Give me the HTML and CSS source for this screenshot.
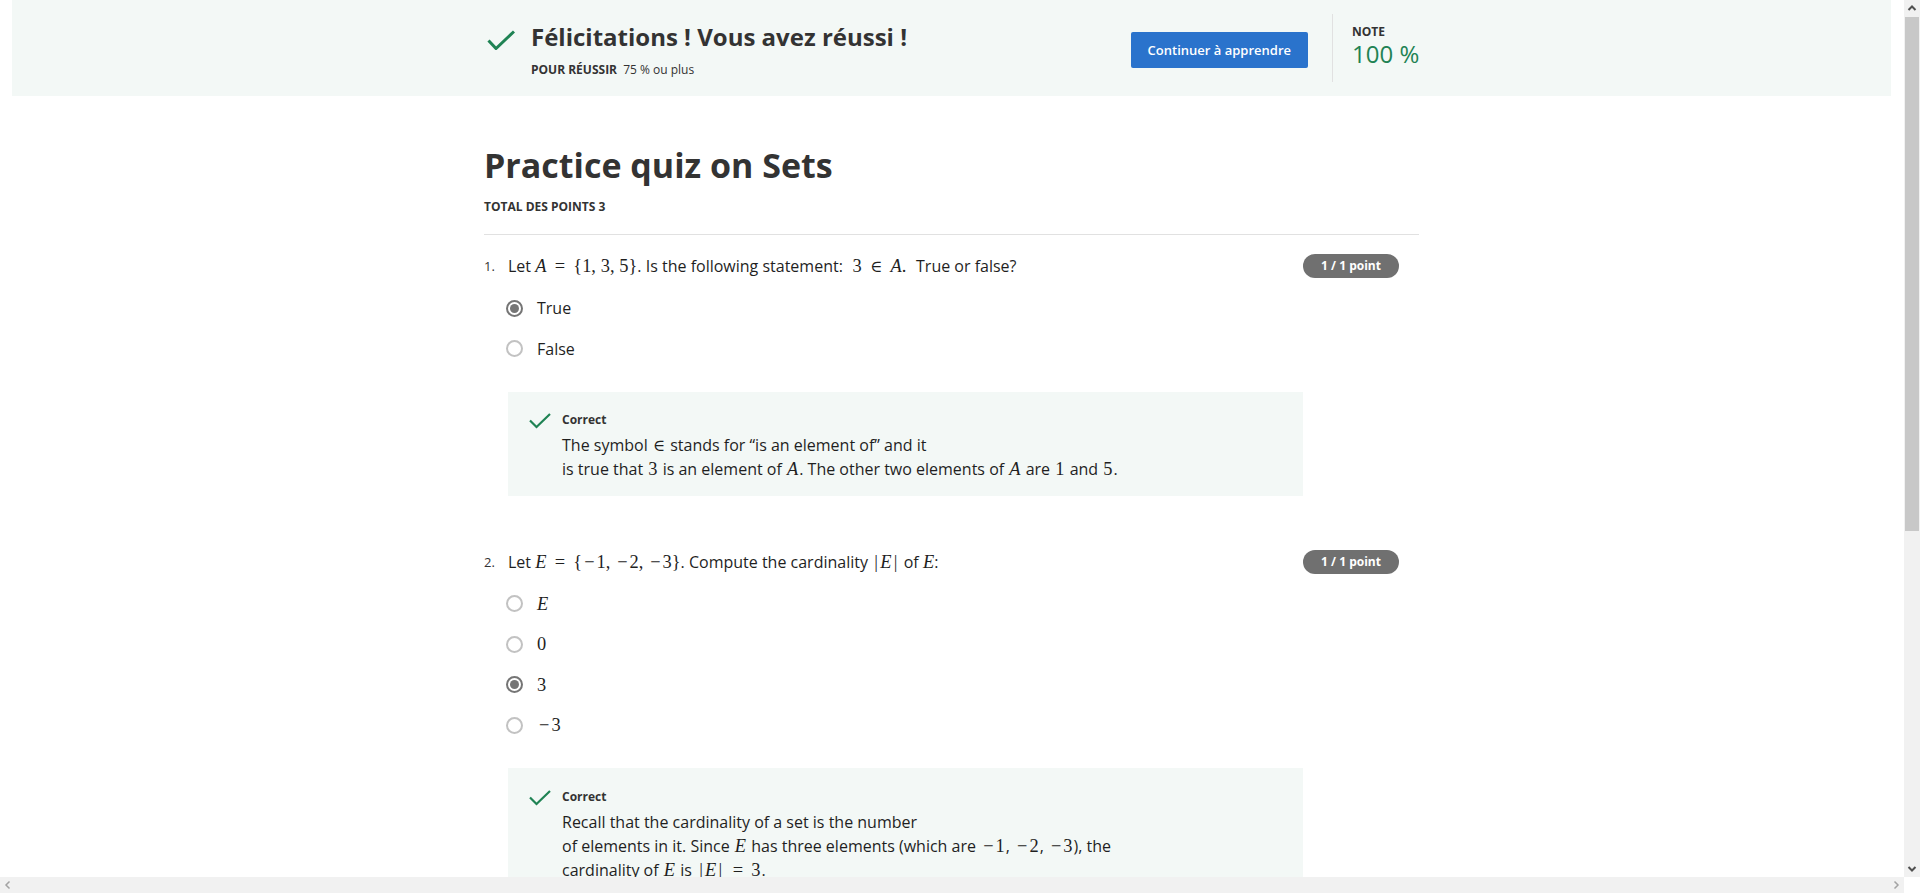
FILE: index.html
```html
<!DOCTYPE html>
<html lang="fr">
<head>
<meta charset="utf-8">
<title>Practice quiz on Sets</title>
<link rel="stylesheet" href="styles.css">
</head>
<body>
<div class="window">
  <div class="viewport">
    <div class="page">
      <header class="banner">
        <div class="banner-inner">
          <div class="result">
            <svg class="result-check" viewBox="0 0 28 20" aria-hidden="true"><polyline points="1.5,10.5 9,18.5 27,1.5" fill="none" stroke="#1f8354" stroke-width="3"/></svg>
            <div class="result-text">
              <h2 class="result-title">Félicitations ! Vous avez réussi !</h2>
              <div class="result-sub"><span class="label">POUR RÉUSSIR</span> 75 % ou plus</div>
            </div>
          </div>
          <button class="btn">Continuer à apprendre</button>
          <div class="divider"></div>
          <div class="grade">
            <div class="label">NOTE</div>
            <div class="grade-value">100 %</div>
          </div>
        </div>
      </header>

      <main class="quiz">
        <h1 class="quiz-title">Practice quiz on Sets</h1>
        <div class="total">TOTAL DES POINTS 3</div>
        <hr class="sep">

        <section class="question">
          <div class="q-num">1.</div>
          <div class="q-body">
            <div class="q-text">Let <span class="m"><i>A</i><span class="op">=</span>{1,<span class="sp"></span>3,<span class="sp"></span>5}</span>. Is the following statement: <span class="m wide">3<span class="op"><span class="el">∈</span></span><i>A</i>.</span> True or false?</div>
            <div class="options">
              <div class="option"><span class="radio checked"></span><span>True</span></div>
              <div class="option"><span class="radio"></span><span>False</span></div>
            </div>
            <div class="feedback">
              <svg class="fb-check" viewBox="0 0 22 16" aria-hidden="true"><polyline points="1,7.5 7.5,14 21,1" fill="none" stroke="#1f8354" stroke-width="2.2"/></svg>
              <div class="fb-content">
                <div class="fb-title">Correct</div>
                <div class="fb-text">The symbol <span class="m"><span class="el">∈</span></span> stands for “is an element of” and it<br>is true that <span class="m">3</span> is an element of <span class="m"><i>A</i></span>. The other two elements of <span class="m"><i>A</i></span> are <span class="m">1</span> and <span class="m">5</span>.</div>
              </div>
            </div>
          </div>
          <div class="badge">1 / 1 point</div>
        </section>

        <section class="question">
          <div class="q-num">2.</div>
          <div class="q-body">
            <div class="q-text">Let <span class="m"><i>E</i><span class="op">=</span>{<span class="mn">−</span>1,<span class="sp"></span><span class="mn">−</span>2,<span class="sp"></span><span class="mn">−</span>3}</span>. Compute the cardinality <span class="m"><span class="bar">|</span><i>E</i><span class="bar">|</span></span> of <span class="m"><i>E</i></span>:</div>
            <div class="options">
              <div class="option"><span class="radio"></span><span class="m"><i>E</i></span></div>
              <div class="option"><span class="radio"></span><span class="m">0</span></div>
              <div class="option"><span class="radio checked"></span><span class="m">3</span></div>
              <div class="option"><span class="radio"></span><span class="m"><span class="mn">−</span>3</span></div>
            </div>
            <div class="feedback feedback-2">
              <svg class="fb-check" viewBox="0 0 22 16" aria-hidden="true"><polyline points="1,7.5 7.5,14 21,1" fill="none" stroke="#1f8354" stroke-width="2.2"/></svg>
              <div class="fb-content">
                <div class="fb-title">Correct</div>
                <div class="fb-text">Recall that the cardinality of a set is the number<br>of elements in it. Since <span class="m"><i>E</i></span> has three elements (which are <span class="m"><span class="mn">−</span>1</span>, <span class="m"><span class="mn">−</span>2</span>, <span class="m"><span class="mn">−</span>3</span>), the<br>cardinality of <span class="m"><i>E</i></span> is <span class="m"><span class="bar">|</span><i>E</i><span class="bar">|</span><span class="op">=</span>3</span>.</div>
              </div>
            </div>
          </div>
          <div class="badge">1 / 1 point</div>
        </section>
      </main>
    </div>
  </div>

  <div class="vscroll" aria-hidden="true">
    <div class="sb-btn"><svg viewBox="0 0 16 17"><polyline points="4.5,10 8,6.5 11.5,10" fill="none" stroke="#505050" stroke-width="2"/></svg></div>
    <div class="v-thumb"></div>
    <div class="v-track"></div>
    <div class="sb-btn"><svg viewBox="0 0 16 17"><polyline points="4.5,7 8,10.5 11.5,7" fill="none" stroke="#505050" stroke-width="2"/></svg></div>
  </div>

  <div class="hscroll" aria-hidden="true">
    <div class="sb-btn-h"><svg viewBox="0 0 17 16"><polyline points="9.5,4.5 6,8 9.5,11.5" fill="none" stroke="#a3a3a3" stroke-width="1.5"/></svg></div>
    <div class="h-track"></div>
    <div class="sb-btn-h"><svg viewBox="0 0 17 16"><polyline points="7.5,4.5 11,8 7.5,11.5" fill="none" stroke="#a3a3a3" stroke-width="1.5"/></svg></div>
  </div>

  <div class="corner"></div>
</div>
</body>
</html>
```

FILE: styles.css
```css
html, body {
  margin: 0;
  height: 100%;
  overflow: hidden;
}

body {
  font-family: "Open Sans", "Liberation Sans", sans-serif;
  color: #1f1f1f;
  background: #ffffff;
}

/* ---------- browser frame with scrollbars ---------- */
.window {
  display: grid;
  grid-template-columns: 1fr 16px;
  grid-template-rows: 1fr 16px;
  height: 100vh;
}

.viewport {
  overflow: hidden;
  min-width: 0;
  min-height: 0;
}

.vscroll {
  display: flex;
  flex-direction: column;
  background: #f1f1f1;
}

.sb-btn {
  height: 17px;
  flex: none;
}

.sb-btn svg {
  display: block;
  width: 16px;
  height: 17px;
}

.v-thumb {
  height: 514px;
  flex: none;
  background: #c8c8c8;
  margin: 0 1px;
}

.v-track {
  flex: 1;
}

.hscroll {
  display: flex;
  background: #f1f1f1;
}

.sb-btn-h {
  width: 17px;
  flex: none;
}

.sb-btn-h svg {
  display: block;
  width: 17px;
  height: 16px;
}

.h-track {
  flex: 1;
}

.corner {
  background: #ffffff;
}

/* ---------- page ---------- */
.page {
  padding: 0 13px 0 12px;
}

/* ---------- banner ---------- */
.banner {
  background: #f3f8f6;
  height: 96px;
}

.banner-inner {
  width: 935px;
  height: 96px;
  margin: 0 auto;
  display: flex;
  align-items: flex-start;
}

.result {
  flex: 1;
  display: flex;
  align-items: flex-start;
  margin-top: 22px;
}

.result-check {
  width: 28px;
  height: 20px;
  margin: 8px 16px 0 3px;
  flex: none;
}

.result-title {
  margin: 0;
  font-size: 24px;
  line-height: 30px;
  font-weight: 700;
  color: #333333;
}

.result-sub {
  margin-top: 10px;
  font-size: 12px;
  line-height: 16px;
  color: #333333;
}

.label {
  font-weight: 700;
  margin-right: 3px;
}

.btn {
  margin-top: 32px;
  height: 36px;
  padding: 0 17px;
  border: 0;
  border-radius: 2px;
  background: #2a73cc;
  color: #ffffff;
  font-family: "Open Sans", sans-serif;
  font-size: 13px;
  font-weight: 600;
}

.divider {
  width: 1px;
  height: 68px;
  margin: 14px 19px 0 24px;
  background: #e1e1e1;
}

.grade {
  width: 67px;
  margin-top: 24px;
}

.grade .label {
  display: block;
  margin: 0;
  font-size: 12px;
  line-height: 16px;
  color: #333333;
}

.grade-value {
  font-size: 24px;
  line-height: 28px;
  color: #1f8354;
  white-space: nowrap;
}

/* ---------- quiz ---------- */
.quiz {
  width: 935px;
  margin: 0 auto;
  padding: 49px 0 40px;
}

.quiz-title {
  margin: 0;
  font-size: 34px;
  line-height: 41px;
  font-weight: 700;
  color: #333333;
}

.total {
  margin-top: 13px;
  font-size: 12px;
  line-height: 16px;
  font-weight: 700;
  color: #333333;
}

.sep {
  margin: 19px 0 0;
  height: 0;
  border: 0;
  border-top: 1px solid #e1e1e1;
}

.question {
  display: flex;
  align-items: flex-start;
  margin-top: 19px;
}

.question + .question {
  margin-top: 54px;
}

.q-num {
  width: 24px;
  flex: none;
  font-size: 13px;
  line-height: 24px;
  color: #333333;
}

.q-body {
  flex: 1;
}

.q-text {
  font-size: 16px;
  line-height: 24px;
}

.badge {
  flex: none;
  width: 96px;
  height: 24px;
  margin-right: 20px;
  border-radius: 12px;
  background: #707070;
  color: #ffffff;
  font-size: 12px;
  font-weight: 700;
  line-height: 24px;
  text-align: center;
}

.options {
  padding-top: 18px;
  display: flex;
  flex-direction: column;
  gap: 16.5px;
}

.option {
  display: flex;
  align-items: center;
  height: 24px;
  font-size: 16px;
}

.radio {
  width: 17px;
  height: 17px;
  box-sizing: border-box;
  border-radius: 50%;
  border: 2px solid #c2c2c2;
  margin: 0 14px 0 -2px;
  display: flex;
  align-items: center;
  justify-content: center;
  flex: none;
}

.radio.checked {
  border-color: #757575;
}

.radio.checked::after {
  content: "";
  width: 9px;
  height: 9px;
  border-radius: 50%;
  background: #757575;
}

.feedback {
  margin-top: 31px;
  padding: 20px 21px 15px;
  background: #f3f8f6;
  display: flex;
  align-items: flex-start;
}

.feedback-2 {
  padding-top: 21px;
}

.fb-check {
  width: 22px;
  height: 16px;
  margin: 1px 11px 0 0;
  flex: none;
}

.fb-title {
  font-size: 12px;
  line-height: 16px;
  font-weight: 700;
  color: #333333;
}

.fb-text {
  margin-top: 5px;
  font-size: 16px;
  line-height: 24px;
}

.fb-text .m {
  margin: 0 1px;
}

/* ---------- math ---------- */
.m {
  font-family: "Liberation Serif", "DejaVu Serif", serif;
  font-size: 1.15em;
  line-height: 0;
}

.m i {
  font-style: italic;
}

.m .op {
  margin: 0 0.45em;
}

.m .el {
  font-size: 0.9em;
}

.m .sp {
  display: inline-block;
  width: 0.26em;
}

.m .mn {
  margin: 0 0.11em;
}

.m .bar {
  margin: 0 0.12em;
}

.m.wide {
  margin: 0 0.3em;
}
```
